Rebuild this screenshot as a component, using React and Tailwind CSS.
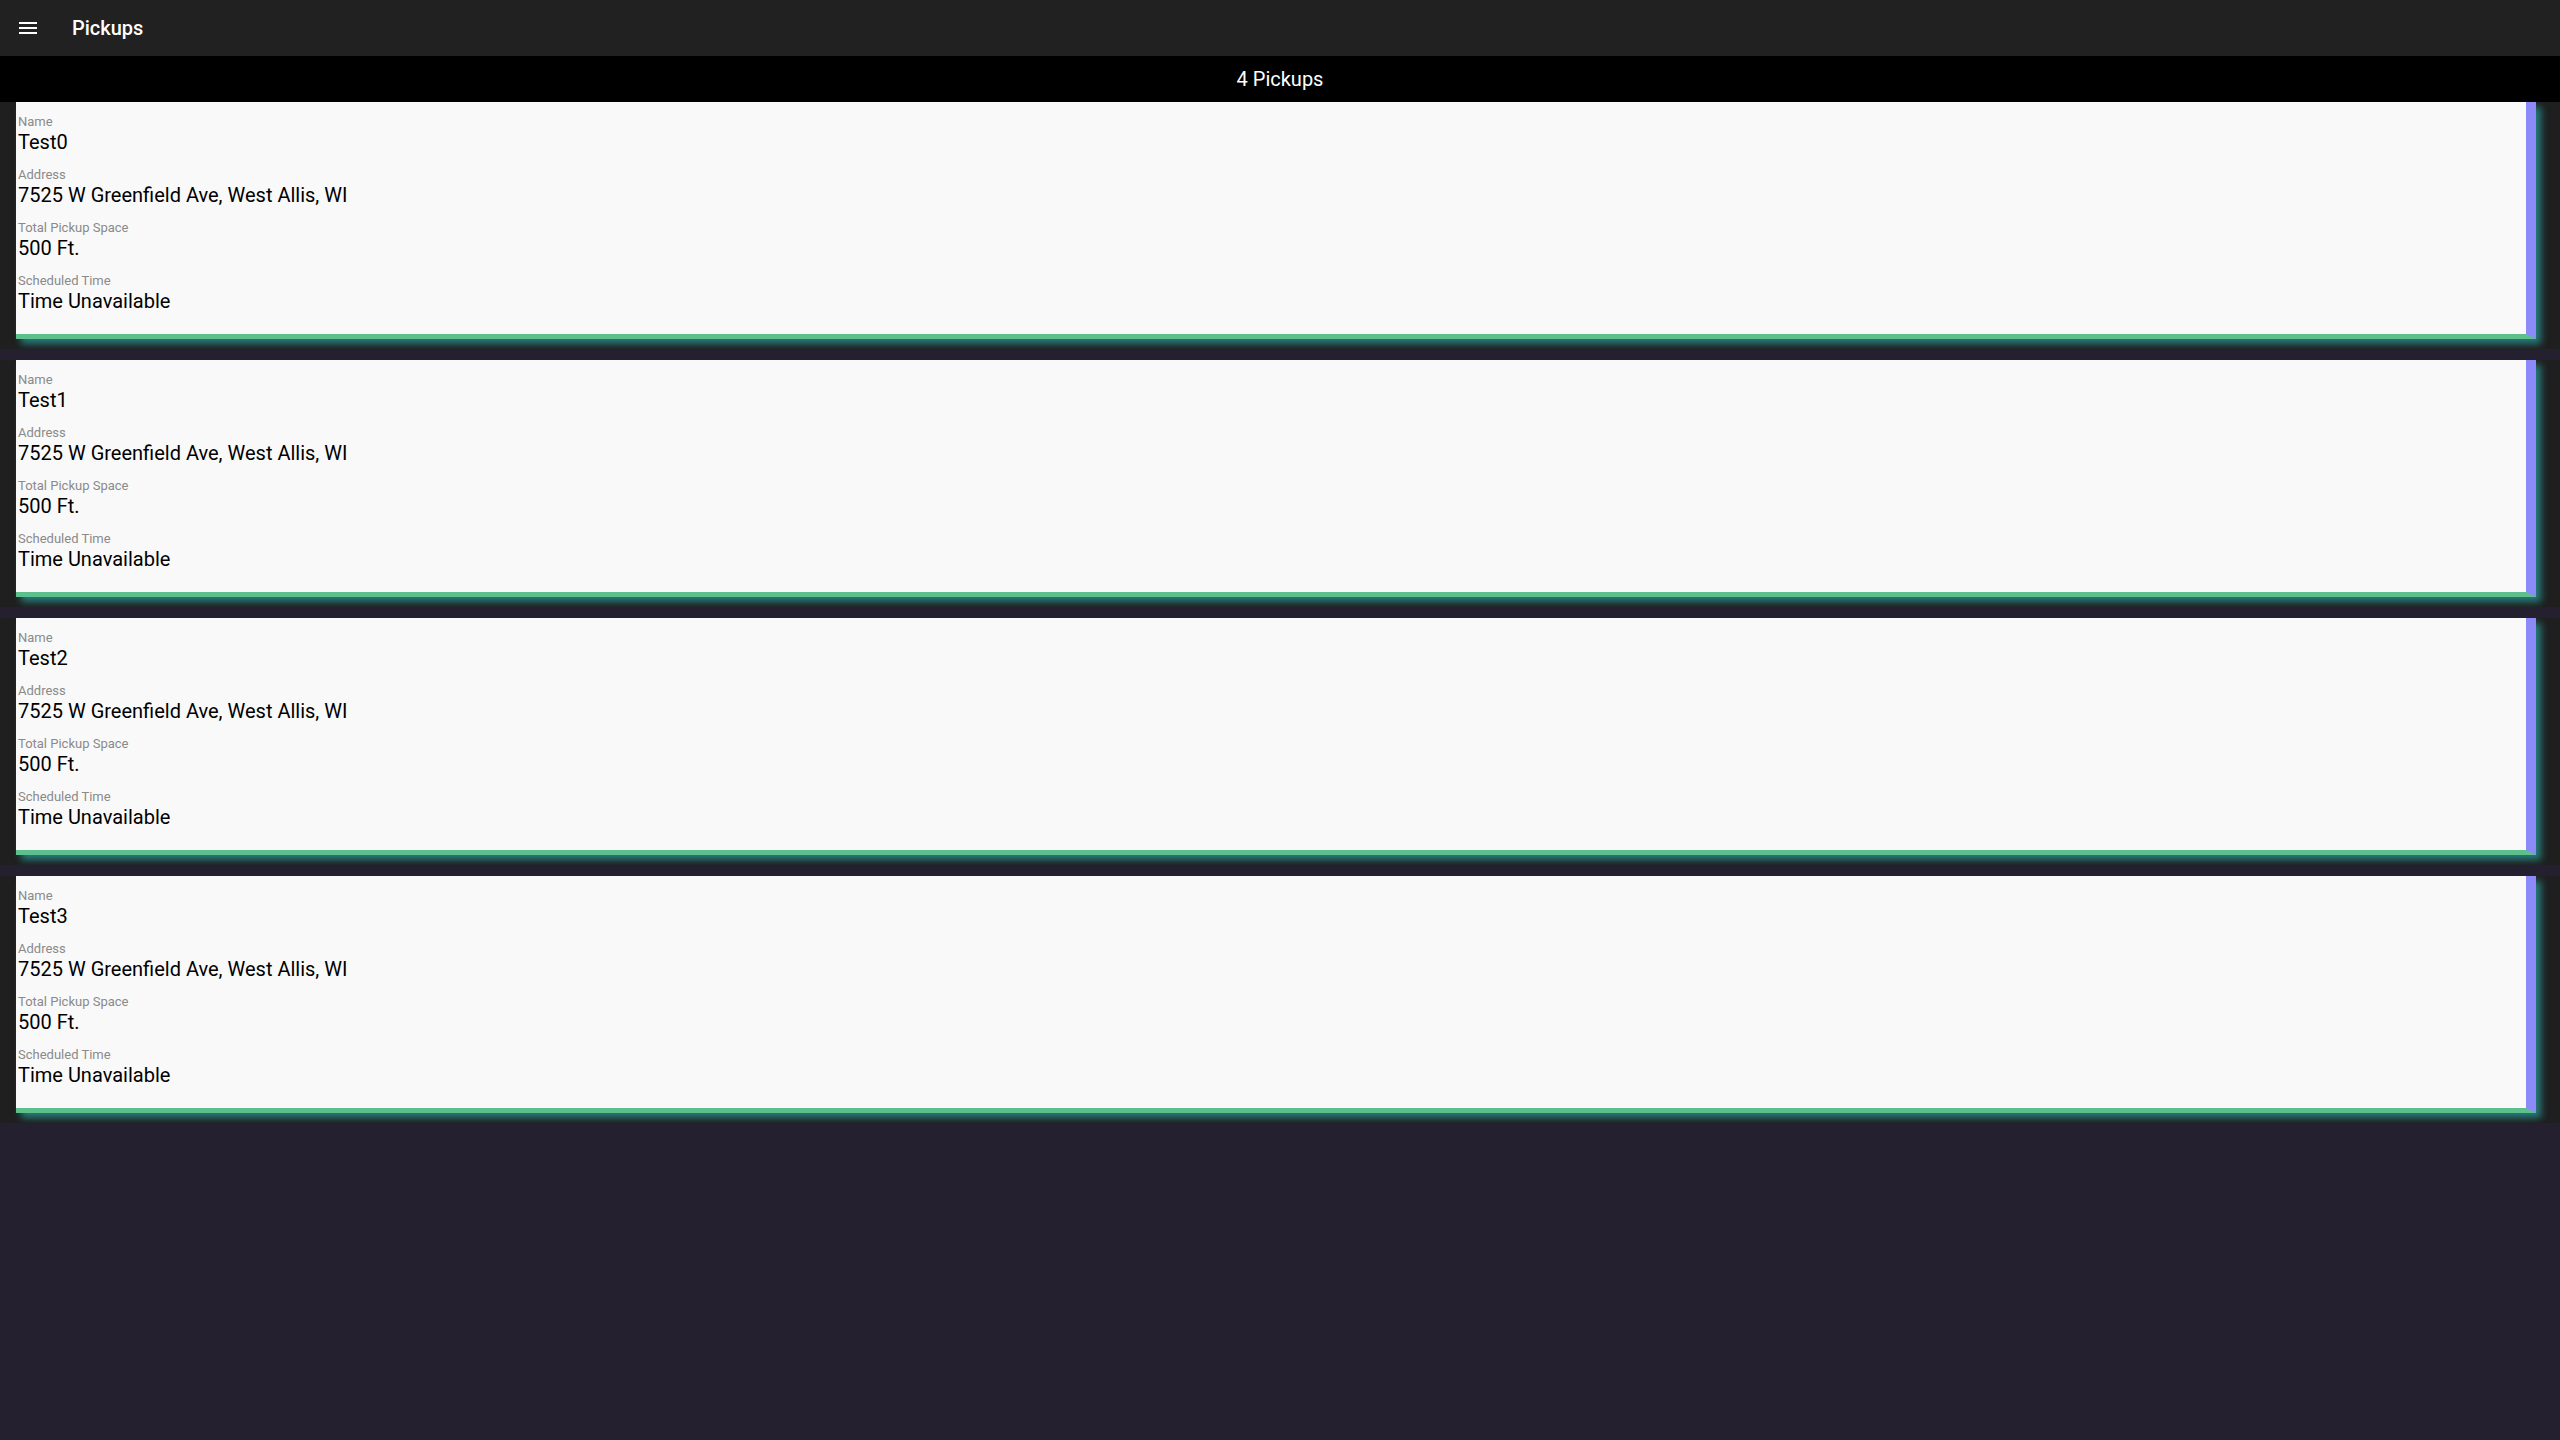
import React from "react";

const pickups = [0, 1, 2, 3].map((i) => ({
  name: `Test${i}`,
  address: "7525 W Greenfield Ave, West Allis, WI",
  space: "500 Ft.",
  time: "Time Unavailable",
}));

function Field({ label, value }) {
  return (
    <div className="mb-[13px]">
      <div className="text-[13px] leading-[16px] text-[#8a8a8a]">{label}</div>
      <div className="text-[20px] leading-[24px] text-black">{value}</div>
    </div>
  );
}

function MenuIcon() {
  return (
    <svg width="24" height="24" viewBox="0 0 24 24" fill="#ffffff">
      <path d="M3 18h18v-2H3v2zm0-5h18v-2H3v2zm0-7v2h18V6H3z" />
    </svg>
  );
}

export default function App() {
  return (
    <div
      className="min-h-screen w-full bg-[#24202f]"
      style={{ fontFamily: "Roboto, 'Noto Sans', Arial, sans-serif" }}
    >
      <header className="flex h-[56px] items-center bg-[#212121] px-4">
        <MenuIcon />
        <div className="ml-8 text-[20px] font-medium text-white">Pickups</div>
      </header>
      <div className="flex h-[46px] items-center justify-center bg-black text-[20px] text-white">
        4 Pickups
      </div>
      <div className="flex flex-col gap-[11px]">
        {pickups.map((p) => (
          <div
            key={p.name}
            className="h-[247px] overflow-hidden bg-[#1f1f1f] pl-4 pr-6"
          >
            <div className="h-[237px] border-r-[10px] border-b-[5px] border-r-[#8c8af8] border-b-[#5cbf8c] bg-[#f9f9f9] px-[2px] pt-[12px] shadow-[5px_5px_7px_rgba(40,140,140,0.85)]">
              <Field label="Name" value={p.name} />
              <Field label="Address" value={p.address} />
              <Field label="Total Pickup Space" value={p.space} />
              <Field label="Scheduled Time" value={p.time} />
            </div>
          </div>
        ))}
      </div>
    </div>
  );
}
